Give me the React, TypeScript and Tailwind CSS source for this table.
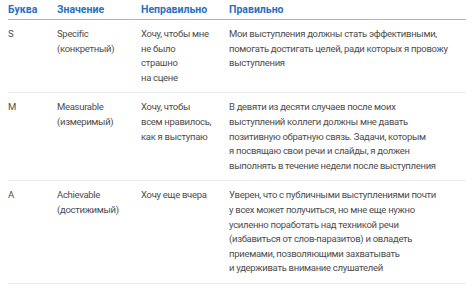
import React from 'react';

const rows = [
  {
    letter: 'S',
    meaning: ['Specific', '(конкретный)'],
    wrong: ['Хочу, чтобы мне', 'не было', 'страшно', 'на сцене'],
    right: [
      'Мои выступления должны стать эффективными,',
      'помогать достигать целей, ради которых я провожу',
      'выступления',
    ],
  },
  {
    letter: 'M',
    meaning: ['Measurable', '(измеримый)'],
    wrong: ['Хочу, чтобы', 'всем нравилось,', 'как я выступаю'],
    right: [
      'В девяти из десяти случаев после моих',
      'выступлений коллеги должны мне давать',
      'позитивную обратную связь. Задачи, которым',
      'я посвящаю свои речи и слайды, я должен',
      'выполнять в течение недели после выступления',
    ],
  },
  {
    letter: 'A',
    meaning: ['Achievable', '(достижимый)'],
    wrong: ['Хочу еще вчера'],
    right: [
      'Уверен, что с публичными выступлениями почти',
      'у всех может получиться, но мне еще нужно',
      'усиленно поработать над техникой речи',
      '(избавиться от слов-паразитов) и овладеть',
      'приемами, позволяющими захватывать',
      'и удерживать внимание слушателей',
    ],
  },
];

const Lines = ({ lines }: { lines: string[] }) => (
  <div className="flex flex-col">
    {lines.map((l, i) => (
      <span key={i} className="whitespace-nowrap">{l}</span>
    ))}
  </div>
);

export default function App() {
  return (
    <div className="w-[474px] h-[288px] bg-white overflow-hidden font-['Roboto',sans-serif]">
      <div className="ml-[8px] w-[458px]">
        {/* Шапка */}
        <div className="grid grid-cols-[49px_84px_88px_1fr] h-[20px] pt-[1px] border-b border-[#9db9d3] text-[10.5px] font-bold text-[#2a6fc0] leading-[17px]">
          <span>Буква</span>
          <span>Значение</span>
          <span>Неправильно</span>
          <span>Правильно</span>
        </div>

        {rows.map((r) => (
          <div
            key={r.letter}
            className="grid grid-cols-[49px_84px_88px_1fr] py-[7px] border-b border-[#ececec] text-[9.5px] tracking-[-0.3px] leading-[14.6px] text-[#4d4d4d]"
          >
            <span>{r.letter}</span>
            <Lines lines={r.meaning} />
            <Lines lines={r.wrong} />
            <Lines lines={r.right} />
          </div>
        ))}
      </div>
    </div>
  );
}
